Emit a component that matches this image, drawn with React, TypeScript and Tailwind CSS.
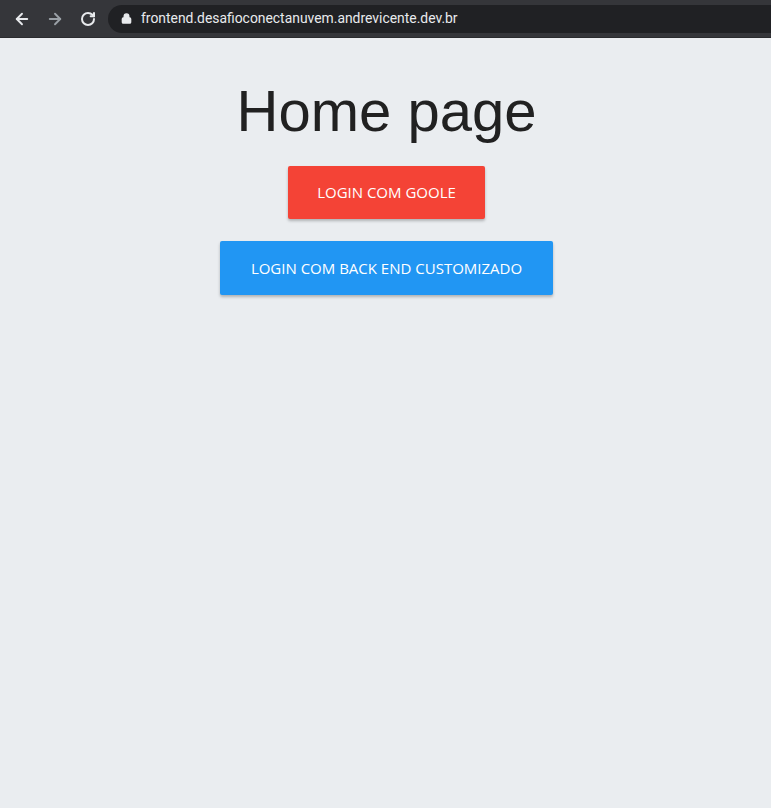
import { ArrowLeft, ArrowRight, RotateCw, Lock } from 'lucide-react';

function BrowserBar() {
  return (
    <div className="flex items-center h-[38px] bg-[#35363a] border-b border-[#2a2b2e] pl-[13px]">
      <ArrowLeft className="w-[18px] h-[18px] text-[#e8eaed]" strokeWidth={2.5} />
      <ArrowRight className="w-[18px] h-[18px] text-[#9aa0a6] ml-[15px]" strokeWidth={2.5} />
      <RotateCw className="w-[16px] h-[16px] text-[#e8eaed] ml-[16px]" strokeWidth={3} />
      <div className="flex-1 flex items-center h-[28px] ml-[12px] bg-[#202124] rounded-l-full pl-[13px]">
        <Lock className="w-[11px] h-[11px] text-[#e8eaed]" strokeWidth={3} fill="#e8eaed" />
        <span className="ml-[9px] text-[13.9px] text-[#e8eaed] font-['Roboto',sans-serif]">
          frontend.desafioconectanuvem.andrevicente.dev.br
        </span>
      </div>
    </div>
  );
}

export default function App() {
  return (
    <div className="min-h-[808px] bg-[#eaedf0] flex flex-col">
      <BrowserBar />
      <div className="flex flex-col items-center pt-[44px] pl-[2px]">
        <h1 className="text-[58px] leading-[58px] text-[#212121] font-['Liberation_Sans',Arial,sans-serif]">
          Home page
        </h1>
        <button className="mt-[26px] w-[197px] h-[53px] bg-[#f44336] text-white text-[15px] uppercase rounded-[2px] shadow-[0_2px_3px_rgba(0,0,0,0.25)] font-['Open_Sans',sans-serif]">
          Login com goole
        </button>
        <button className="mt-[22px] w-[333px] h-[54px] bg-[#2196f3] text-white text-[15px] uppercase rounded-[2px] shadow-[0_2px_3px_rgba(0,0,0,0.25)] font-['Open_Sans',sans-serif]">
          Login com back end customizado
        </button>
      </div>
    </div>
  );
}
